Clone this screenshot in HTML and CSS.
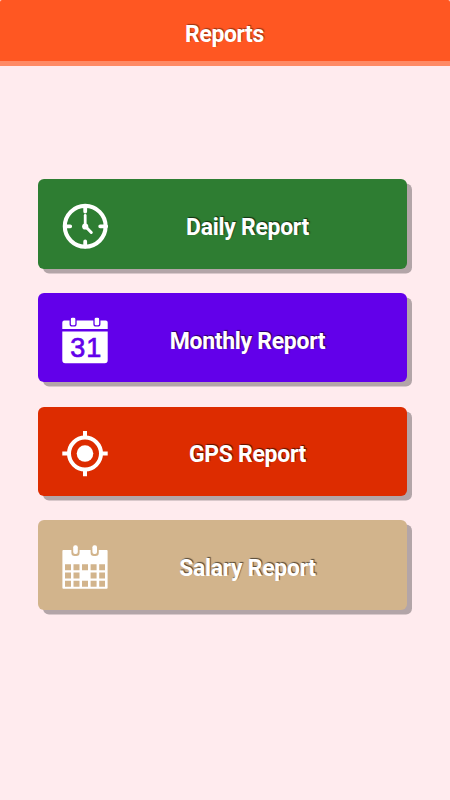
FILE: index.html
```html
<!DOCTYPE html>
<html lang="en">
<head>
<meta charset="utf-8">
<title>Reports</title>
<link rel="stylesheet" href="styles.css">
</head>
<body>
<header class="bar"><h1>Reports</h1></header>
<main class="list">
  <button class="card daily">
    <svg class="icon" viewBox="0 -1 70 70" fill="none" stroke="#fff">
      <circle cx="35.2" cy="36.3" r="20.4" stroke-width="4.1"/>
      <path d="M35.2 16v5.5M35.2 51.5v5M15 36.3h5.2M50.2 36.3h6" stroke-width="3.8" stroke-linecap="round"/>
      <path d="M35.2 25.5v11" stroke-width="2.8" stroke-linecap="round"/>
      <path d="M35.5 36.5l5.8 6" stroke-width="3" stroke-linecap="round"/>
      <circle cx="35.2" cy="36.5" r="3.1" fill="#fff" stroke="none"/>
    </svg>
    <span class="label">Daily Report</span>
  </button>
  <button class="card monthly">
    <svg class="icon" viewBox="0 -2.5 70 70">
      <path fill="#fff" d="M14.3 15h41.4a2 2 0 0 1 2 2v6.5H12.3V17a2 2 0 0 1 2-2zM12.3 26h45.4v28.7a3 3 0 0 1-3 3H15.3a3 3 0 0 1-3-3z"/>
      <g fill="#fff" stroke="#6200ea" stroke-width="1.3"><rect x="20.2" y="11.6" width="5.8" height="8.8" rx="2"/><rect x="44" y="11.6" width="5.8" height="8.8" rx="2"/></g>
      <text class="date" x="20.3 36.2" y="51.5">31</text>
    </svg>
    <span class="label">Monthly Report</span>
  </button>
  <button class="card gps">
    <svg class="icon" viewBox="0 -3.75 70 70" fill="none" stroke="#fff" stroke-width="4">
      <circle cx="35" cy="33.8" r="16"/>
      <circle cx="35" cy="33.8" r="8.3" fill="#fff" stroke="none"/>
      <path d="M35 11.2v6M35 50.5v6M12.3 33.8h6M51.7 33.8h6"/>
    </svg>
    <span class="label">GPS Report</span>
  </button>
  <button class="card salary">
    <svg class="icon" viewBox="0 -3 70 70">
      <rect x="12.4" y="17" width="45.2" height="38.7" rx="1" fill="#fff"/>
      <g fill="#d2b48c">
        <path d="M15 31.3h6v6H15zM23.5 31.3h6v6h-6zM32 31.3h6v6h-6zM40.6 31.3h6v6h-6zM49.2 31.3H55v6h-5.8z"/>
        <path d="M15 39.5h6v6H15zM23.5 39.5h6v6h-6zM40.6 39.5h6v6h-6zM49.2 39.5H55v6h-5.8z"/>
        <path d="M15 47.7h6v6H15zM23.5 47.7h6v6h-6zM32 47.7h6v6h-6zM40.6 47.7h6v6h-6zM49.2 47.7H55v6h-5.8z"/>
        <path d="M21.4 16h8.2v3.8a3.2 3.2 0 0 1-3.2 3.2h-1.8a3.2 3.2 0 0 1-3.2-3.2zM40.6 16h8.2v3.8a3.2 3.2 0 0 1-3.2 3.2h-1.8a3.2 3.2 0 0 1-3.2-3.2z"/>
      </g>
      <g fill="#fff"><rect x="23.2" y="12.3" width="4.6" height="8.8" rx="2"/><rect x="42.4" y="12.3" width="4.6" height="8.8" rx="2"/></g>
    </svg>
    <span class="label">Salary Report</span>
  </button>
</main>
</body>
</html>
```
FILE: styles.css
```css
body {
  margin: 0;
  height: 800px;
  background: #ffebee;
  font-family: Roboto, sans-serif;
  overflow: hidden;
}

.bar {
  box-sizing: border-box;
  height: 66px;
  display: flex;
  align-items: center;
  justify-content: center;
  padding: 9px 1px 0 0;
  background: #ff5722;
  border-bottom: 5px solid #ff8a65;
  border-radius: 2px 2px 0 0;
}

.bar h1 {
  margin: 0;
  color: #fff;
  font-size: 23px;
  font-weight: 700;
  letter-spacing: -0.4px;
  line-height: 26px;
  text-shadow: 1px -1px 1px rgba(0, 0, 0, 0.4);
}

.list {
  display: flex;
  flex-direction: column;
  gap: 24.25px;
  padding: 113px 43px 0 38px;
}

.card {
  box-sizing: border-box;
  height: 89.5px;
  padding: 0 0 0 12px;
  display: flex;
  align-items: center;
  border: 0;
  border-radius: 6px;
  box-shadow: 5px 4.5px 0 #b3a5a8;
  color: #fff;
  font: 700 23px/28px Roboto, sans-serif;
  letter-spacing: -0.3px;
}

.daily { background: #2e7d32; }
.monthly { background: #6200ea; }
.gps { background: #dd2c00; }
.salary { background: #d2b48c; }

.icon {
  flex: none;
  width: 70px;
  height: 70px;
}

.label {
  flex: 1;
  padding: 8px 32px 0 0;
  text-align: center;
  white-space: nowrap;
  text-shadow: 1px -1px 1px rgba(0, 0, 0, 0.6);
}

.date {
  fill: #6200ea;
  stroke: #6200ea;
  stroke-width: 0.7px;
  font: 400 27px "Liberation Sans", sans-serif;
  letter-spacing: 0;
}
```
